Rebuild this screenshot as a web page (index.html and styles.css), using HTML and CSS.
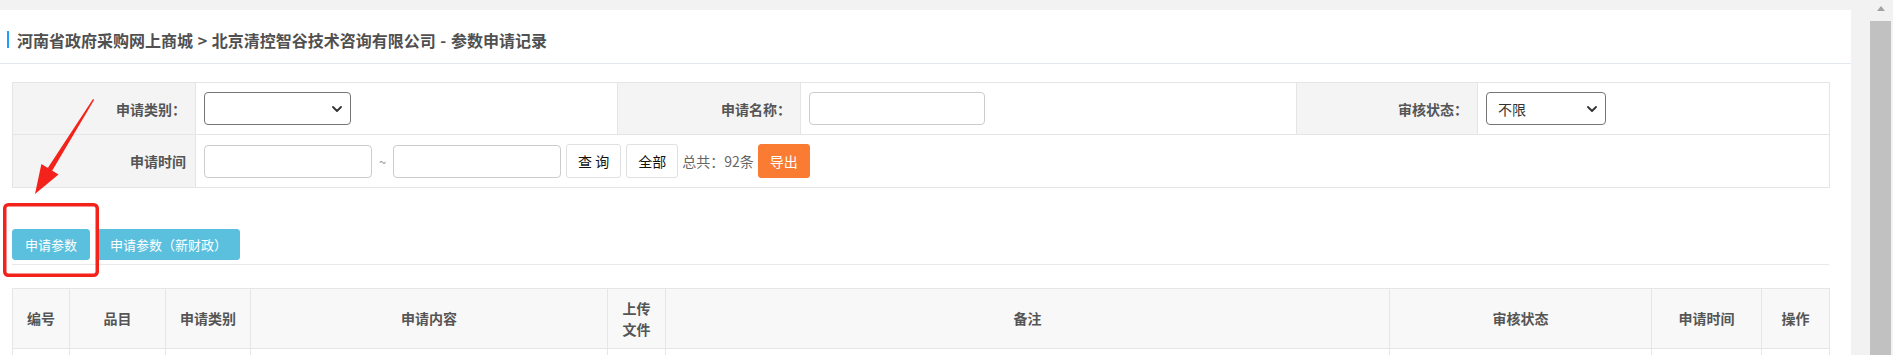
FILE: index.html
```html
<!DOCTYPE html>
<html lang="zh-CN">
<head>
<meta charset="utf-8">
<title>参数申请记录</title>
<link rel="stylesheet" href="styles.css">
</head>
<body>
<div class="page">
  <div class="title">
    <span class="title-bar"></span>
    <span class="title-text">河南省政府采购网上商城 &gt; 北京清控智谷技术咨询有限公司 - 参数申请记录</span>
  </div>

  <table class="filter">
    <colgroup>
      <col class="fc1"><col class="fc2"><col class="fc3"><col class="fc4"><col class="fc5"><col class="fc6">
    </colgroup>
    <tr class="frow1">
      <td class="flabel">申请类别：</td>
      <td class="fvalue">
        <span class="sel sel-type">
          <select class="select"><option></option></select>
          <svg class="chev" width="10" height="6" viewBox="0 0 10 6"><path d="M1 1l4 4 4-4" fill="none" stroke="#333" stroke-width="1.8" stroke-linecap="round" stroke-linejoin="round"/></svg>
        </span>
      </td>
      <td class="flabel">申请名称：</td>
      <td class="fvalue"><input class="input input-name" type="text"></td>
      <td class="flabel">审核状态：</td>
      <td class="fvalue">
        <span class="sel sel-status">
          <select class="select"><option>不限</option></select>
          <svg class="chev" width="10" height="6" viewBox="0 0 10 6"><path d="M1 1l4 4 4-4" fill="none" stroke="#333" stroke-width="1.8" stroke-linecap="round" stroke-linejoin="round"/></svg>
        </span>
      </td>
    </tr>
    <tr class="frow2">
      <td class="flabel">申请时间</td>
      <td class="fvalue" colspan="5">
        <div class="timebar">
          <input class="input input-date" type="text">
          <span class="tilde">~</span>
          <input class="input input-date" type="text">
          <button class="btn btn-plain btn-query">查 询</button>
          <button class="btn btn-plain">全部</button>
          <span class="total">总共：92条</span>
          <button class="btn btn-export">导出</button>
        </div>
      </td>
    </tr>
  </table>

  <div class="toolbar">
    <button class="btn btn-info">申请参数</button>
    <button class="btn btn-info">申请参数（新财政）</button>
  </div>

  <table class="grid">
    <colgroup>
      <col class="gc1"><col class="gc2"><col class="gc3"><col class="gc4"><col class="gc5"><col class="gc6"><col class="gc7"><col class="gc8"><col class="gc9">
    </colgroup>
    <thead>
      <tr>
        <th>编号</th>
        <th>品目</th>
        <th>申请类别</th>
        <th>申请内容</th>
        <th class="th-file">上传文件</th>
        <th>备注</th>
        <th>审核状态</th>
        <th>申请时间</th>
        <th>操作</th>
      </tr>
    </thead>
    <tbody>
      <tr><td></td><td></td><td></td><td></td><td></td><td></td><td></td><td></td><td></td></tr>
    </tbody>
  </table>
</div>

<div class="side">
  <span class="sb-up"></span>
  <span class="sb-thumb"></span>
</div>

<svg class="annot" width="120" height="290" viewBox="0 0 120 290">
  <polygon points="93,99 94.2,99.8 52,171 47.6,168.3" fill="#f3231c"/>
  <polygon points="35,194 58.5,174.4 41.4,163.9" fill="#f3231c"/>
  <rect x="4.75" y="204.75" width="92.5" height="70.5" rx="3.5" ry="3.5" fill="none" stroke="#f3231c" stroke-width="3.5"/>
</svg>
</body>
</html>
```

FILE: styles.css
```css
html, body {
  margin: 0;
  padding: 0;
}

body {
  position: relative;
  display: flex;
  align-items: flex-start;
  width: 1893px;
  height: 355px;
  overflow: hidden;
  background: #f2f2f2;
  font-family: "Microsoft YaHei", "Noto Sans CJK SC", "Noto Sans", sans-serif;
  font-size: 14px;
  color: #333;
}

.page {
  flex: none;
  width: 1851px;
  height: 345px;
  margin-top: 10px;
  background: #fff;
  overflow: hidden;
}

/* title */
.title {
  box-sizing: border-box;
  height: 54px;
  padding: 6px 0 0 7px;
  border-bottom: 1px solid #e3e7ee;
  display: flex;
  align-items: center;
}

.title-bar {
  width: 2px;
  height: 17px;
  background: #1e9fff;
  margin-right: 8px;
}

.title-text {
  font-size: 16px;
  font-weight: bold;
  color: #505050;
  line-height: 20px;
  white-space: nowrap;
  word-spacing: 1px;
}

/* filter table */
.filter {
  margin: 18px 0 0 12px;
  width: 1817px;
  table-layout: fixed;
  border-collapse: collapse;
}

.fc1 { width: 183px; }
.fc2 { width: 422px; }
.fc3 { width: 183px; }
.fc4 { width: 496px; }
.fc5 { width: 181px; }
.fc6 { width: 352px; }

.filter td {
  border: 1px solid #e5e5e5;
  padding: 0;
}

.frow1 td { height: 51px; }
.frow2 td { height: 52px; }

.flabel {
  background: #f4f4f4;
  text-align: right;
  padding-right: 9px !important;
  font-weight: bold;
  color: #555;
  line-height: 20px;
}

.fvalue {
  padding-left: 8px !important;
}

.sel {
  position: relative;
  display: inline-block;
  vertical-align: middle;
}

.select {
  -webkit-appearance: none;
  appearance: none;
  box-sizing: border-box;
  height: 33px;
  border: 1px solid #767676;
  border-radius: 4px;
  background: #fff;
  font-family: inherit;
  font-size: 14px;
  color: #333;
  padding: 0 24px 0 11px;
  margin: 0;
  display: block;
}

.sel-type .select { width: 147px; }
.sel-status .select { width: 120px; }

.chev {
  position: absolute;
  right: 9px;
  top: 14px;
}

.input {
  box-sizing: border-box;
  height: 33px;
  border: 1px solid #ccc;
  border-radius: 4px;
  background: #fff;
  margin: 0;
  padding: 0 8px;
  font-family: inherit;
  font-size: 14px;
  vertical-align: middle;
}

.input-name { width: 176px; }
.input-date { width: 168px; }

.timebar {
  display: flex;
  align-items: center;
}

.tilde {
  width: 21px;
  text-align: center;
  color: #999;
  font-size: 13px;
}

.btn {
  box-sizing: border-box;
  margin: 0;
  border: 1px solid transparent;
  border-radius: 3px;
  font-family: inherit;
  font-size: 14px;
  line-height: 20px;
  cursor: pointer;
  white-space: nowrap;
}

.btn-plain {
  height: 34px;
  padding: 0 11px;
  background: #fff;
  border-color: #e0e0e0;
  color: #111;
  margin-left: 5px;
}

.total {
  margin: 0 4px;
  color: #666;
  font-size: 14px;
  line-height: 20px;
}

.btn-export {
  height: 34px;
  padding: 0 11px;
  background: #f97c32;
  border-color: #f97c32;
  color: #fff;
}

/* toolbar */
.toolbar {
  margin: 41px 22px 0 12px;
  padding-bottom: 4px;
  border-bottom: 1px solid #e8e8e8;
  display: flex;
  gap: 7px;
}

.btn-info {
  height: 31px;
  padding: 0 12px;
  background: #5bc0de;
  border-color: #5bc0de;
  color: #fff;
  font-size: 13px;
}

/* data grid */
.grid {
  margin: 23px 0 0 12px;
  width: 1817px;
  table-layout: fixed;
  border-collapse: collapse;
}

.gc1 { width: 57px; }
.gc2 { width: 96px; }
.gc3 { width: 85px; }
.gc4 { width: 357px; }
.gc5 { width: 58px; }
.gc6 { width: 724px; }
.gc7 { width: 262px; }
.gc8 { width: 110px; }
.gc9 { width: 68px; }

.grid th {
  height: 59px;
  background: #f8f8f8;
  border: 1px solid #e6e6e6;
  font-weight: bold;
  color: #555;
  font-size: 14px;
  line-height: 21px;
  text-align: center;
  padding: 0 7px;
}

.grid th.th-file {
  padding: 0 12px;
}

.grid td {
  height: 40px;
  border: 1px solid #e6e6e6;
}

/* fake scrollbar */
.side {
  flex: none;
  width: 23px;
  height: 355px;
  margin-left: 19px;
  display: flex;
  flex-direction: column;
  align-items: center;
}

.sb-up {
  width: 0;
  height: 0;
  margin-top: 6px;
  border-left: 4px solid transparent;
  border-right: 4px solid transparent;
  border-bottom: 5px solid #a3a3a3;
  margin-right: 2px;
}

.sb-thumb {
  width: 21px;
  flex: 1;
  margin-top: 10px;
  margin-right: 2px;
  background: #c1c1c1;
}

/* annotation overlay */
.annot {
  position: absolute;
  left: 0;
  top: 0;
  pointer-events: none;
}
```
